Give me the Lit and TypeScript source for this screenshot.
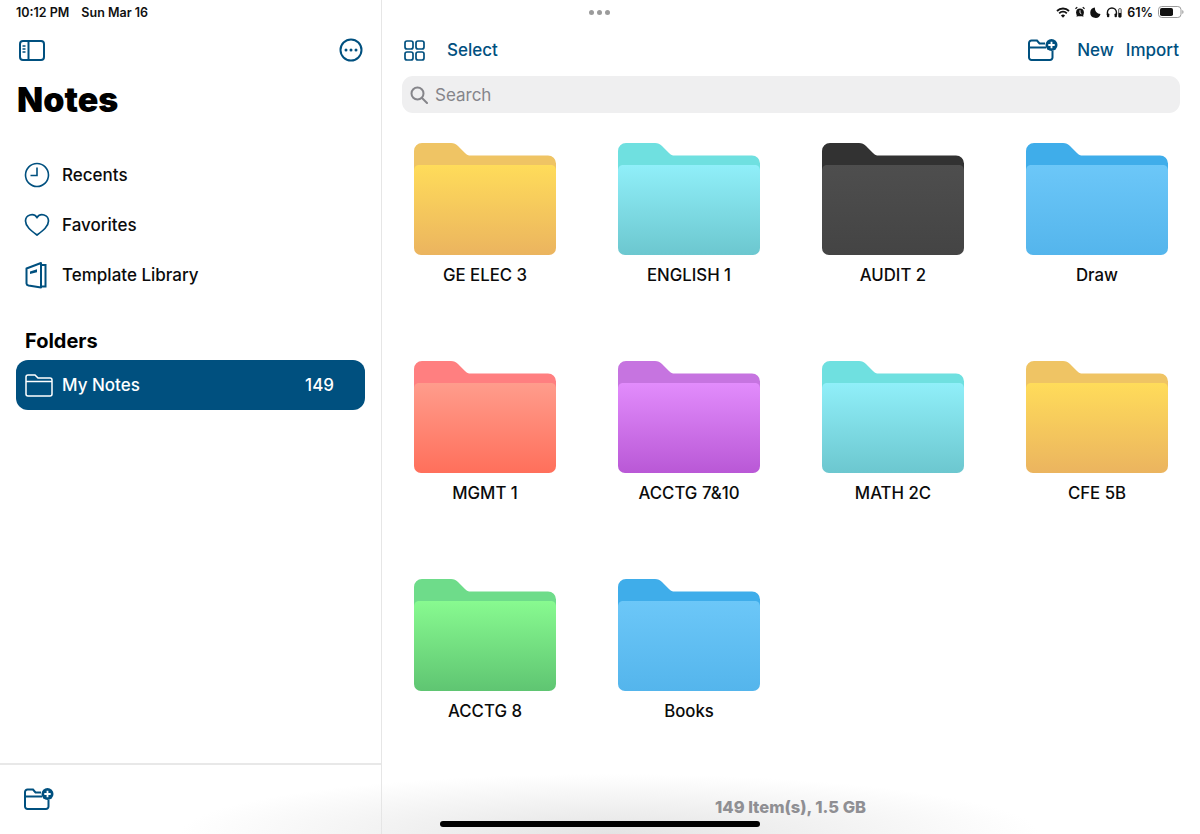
import { LitElement, html, css, svg } from 'lit';
import { customElement } from 'lit/decorators.js';

const INK = '#00507f';

type Tone = { back: string; top: string; bottom: string };

const TONES: Record<string, Tone> = {
  yellow: { back: '#efc464', top: '#ffdc5a', bottom: '#ebb45f' },
  cyan: { back: '#6fe0e0', top: '#90eff9', bottom: '#6cc7cf' },
  dark: { back: '#323232', top: '#4e4e4e', bottom: '#444444' },
  blue: { back: '#3fadea', top: '#6cc7f8', bottom: '#54b5ec' },
  red: { back: '#ff7f80', top: '#ff9c8c', bottom: '#ff6f5b' },
  purple: { back: '#c674e0', top: '#e28cfc', bottom: '#b958d6' },
  green: { back: '#6edc8a', top: '#88fa90', bottom: '#5fc572' },
};

const FOLDERS = [
  { name: 'GE ELEC 3', tone: 'yellow' },
  { name: 'ENGLISH 1', tone: 'cyan' },
  { name: 'AUDIT 2', tone: 'dark' },
  { name: 'Draw', tone: 'blue' },
  { name: 'MGMT 1', tone: 'red' },
  { name: 'ACCTG 7&10', tone: 'purple' },
  { name: 'MATH 2C', tone: 'cyan' },
  { name: 'CFE 5B', tone: 'yellow' },
  { name: 'ACCTG 8', tone: 'green' },
  { name: 'Books', tone: 'blue' },
];

const folderArt = (tone: Tone, id: string) => html`
  <svg class="folder-art" viewBox="0 0 142 112" width="142" height="112">
    <defs>
      <linearGradient id=${id} x1="0" y1="0" x2="0" y2="1">
        <stop offset="0" stop-color=${tone.top}></stop>
        <stop offset="1" stop-color=${tone.bottom}></stop>
      </linearGradient>
    </defs>
    <path
      d="M0 8a8 8 0 0 1 8-8h29c3 0 5 1 7 3l7 7c2 2 3 2.500 6 2.500h77a8 8 0 0 1 8 8V32H0z"
      fill=${tone.back}
    ></path>
    <path
      d="M0 28C0 24 2 22 5 22H137C140 22 142 24 142 28V105a7 7 0 0 1-7 7H7a7 7 0 0 1-7-7z"
      fill="url(#${id})"
    ></path>
  </svg>
`;

const icon = (w: number, h: number, body: unknown, box = `0 0 ${w} ${h}`) => html`
  <svg class="icon" width=${w} height=${h} viewBox=${box} fill="none" stroke=${INK} stroke-width="2">
    ${body}
  </svg>
`;

const ICONS = {
  sidebar: icon(
    26,
    21,
    svg`<rect x="1" y="1" width="24" height="19" rx="3"></rect>
      <path d="M9.500 1v19"></path>
      <path d="M3.500 6h3M3.500 9h3M3.500 12h3" stroke-width="1.500"></path>`,
  ),
  more: icon(
    24,
    24,
    svg`<circle cx="12" cy="12" r="10.500"></circle>
      <g fill=${INK} stroke="none">
        <circle cx="7" cy="12" r="1.500"></circle>
        <circle cx="12" cy="12" r="1.500"></circle>
        <circle cx="17" cy="12" r="1.500"></circle>
      </g>`,
  ),
  clock: icon(
    26,
    26,
    svg`<circle cx="13" cy="13" r="11.500" stroke-width="1.600"></circle>
      <path d="M13 5.500v8H6.500" stroke-width="1.600"></path>`,
  ),
  heart: icon(
    26,
    24,
    svg`<path d="M13 22C7 17.500 1.500 13.500 1.500 8A6.300 6.300 0 0 1 13 4.500 6.300 6.300 0 0 1 24.500 8C24.500 13.500 19 17.500 13 22Z" stroke-width="1.700"></path>`,
  ),
  book: icon(
    24,
    28,
    svg`<path d="M2.500 7.500 17 2v24.500L4.500 24.500Q2.500 24 2.500 22.500Z" stroke-linejoin="round"></path>
      <path d="M17 4h4.500v21.500H17"></path>
      <path d="M6 10.500 13 8.200v3L6 13z" fill=${INK} stroke="none"></path>`,
  ),
  folder: html`<svg class="icon" width="28" height="23" viewBox="0 0 28 23" fill="none" stroke="#fff" stroke-width="1.500">
    <path d="M1 4V3a2 2 0 0 1 2-2h7l3 3h12a2 2 0 0 1 2 2v14a2 2 0 0 1-2 2H3a2 2 0 0 1-2-2z"></path>
    <path d="M1 7.500h26"></path>
  </svg>`,
  grid: icon(
    21,
    21,
    svg`<g stroke-width="1.700">
      <rect x="1" y="1" width="8" height="8" rx="2"></rect>
      <rect x="12" y="1" width="8" height="8" rx="2"></rect>
      <rect x="1" y="12" width="8" height="8" rx="2"></rect>
      <rect x="12" y="12" width="8" height="8" rx="2"></rect>
    </g>`,
  ),
  folderPlus: icon(
    30,
    22,
    svg`<path d="M17 4.500H11.500L9 1.500H3.500A2.500 2.500 0 0 0 1 4V18.500A2.500 2.500 0 0 0 3.500 21H22a2.500 2.500 0 0 0 2.500-2.500V12"></path>
      <path d="M1 8.500H18"></path>
      <circle cx="23.500" cy="6" r="6" fill=${INK} stroke="none"></circle>
      <path d="M23.500 2.800v6.400M20.300 6h6.400" stroke="#fff" stroke-width="1.800"></path>`,
  ),
};

@customElement('status-icons')
class StatusIcons extends LitElement {
  static styles = css`
    :host {
      display: flex;
      align-items: center;
      gap: 5px;
      font: 600 12.5px 'Inter', sans-serif;
      color: #111;
    }

    svg {
      display: block;
    }
  `;

  render() {
    return html`
      <svg width="14" height="11" viewBox="0 0 14 11" fill="none" stroke="#111" stroke-width="1.800">
        <path d="M1 4a8.500 8.500 0 0 1 12 0M3.200 6.300a5.300 5.300 0 0 1 7.600 0"></path>
        <path d="M7 10.800 4.900 8.500a3 3 0 0 1 4.200 0z" fill="#111" stroke="none"></path>
      </svg>
      <svg width="10" height="12" viewBox="0 0 11 12">
        <circle cx="5.500" cy="6.500" r="4.300" fill="#111"></circle>
        <path d="M.5 2.500 2.500.8M10.500 2.500 8.500.8M2 11l1-1.500M9 11 8 9.500" stroke="#111" stroke-width="1.300"></path>
        <path d="M5.500 4v3l1.500 1" stroke="#fff" fill="none"></path>
      </svg>
      <svg width="11" height="11" viewBox="0 0 11 11">
        <path d="M5 .5A5.200 5.200 0 1 0 10.500 7 5.500 5.500 0 0 1 5 .5Z" fill="#111"></path>
      </svg>
      <svg width="16" height="12" viewBox="0 0 17 12" fill="none" stroke="#111" stroke-width="1.500">
        <path d="M1.500 9V6.500a4.800 4.800 0 0 1 9.600 0V9"></path>
        <rect x="1" y="7.500" width="2.500" height="4" rx="1" fill="#111" stroke="none"></rect>
        <rect x="9.100" y="7.500" width="2.500" height="4" rx="1" fill="#111" stroke="none"></rect>
        <rect x="13.500" y="2.500" width="2.600" height="9" rx=".6" stroke-width=".8"></rect>
        <rect x="13.500" y="7" width="2.600" height="4.500" fill="#111" stroke="none"></rect>
      </svg>
      <span>61%</span>
      <svg width="26" height="12" viewBox="0 0 26 12">
        <rect x=".5" y=".5" width="22.500" height="11" rx="3.200" fill="none" stroke="#9a9a9a"></rect>
        <rect x="2" y="2" width="13" height="8" rx="1.800" fill="#111"></rect>
        <path d="M24.300 4v4a2 2 0 0 0 1.200-2 2 2 0 0 0-1.200-2z" fill="#9a9a9a"></path>
      </svg>
    `;
  }
}

@customElement('app-root')
export class AppRoot extends LitElement {
  static styles = css`
    :host {
      display: flex;
      position: relative;
      width: 1200px;
      height: 834px;
      overflow: hidden;
      background: #fff;
      color: #0b0b0b;
      font-family: 'Inter', 'Liberation Sans', sans-serif;
    }

    .icon {
      display: block;
      flex: none;
    }

    .sidebar {
      width: 381px;
      flex: none;
      display: flex;
      flex-direction: column;
      border-right: 1px solid #e6e6e6;
    }

    .clock-row {
      height: 24px;
      padding-left: 16px;
      display: flex;
      align-items: center;
      gap: 12px;
      font-size: 12.500px;
      font-weight: 600;
      color: #111;
    }

    .side-tools {
      display: flex;
      justify-content: space-between;
      align-items: center;
      padding: 14px 18px 0 19px;
      height: 24px;
    }

    h1 {
      margin: 16px 0 0 17px;
      font-size: 34px;
      line-height: 44px;
      font-weight: 900;
      color: #000;
    }

    .nav {
      margin-top: 28px;
      display: flex;
      flex-direction: column;
    }

    .nav-row {
      height: 50px;
      padding-left: 24px;
      display: flex;
      align-items: center;
      font-size: 17px;
      font-weight: 500;
    }

    .nav-icon {
      width: 38px;
      display: flex;
      flex: none;
    }

    h2 {
      margin: 26px 0 0 25px;
      font-size: 20px;
      line-height: 30px;
      font-weight: 700;
      color: #000;
    }

    .current {
      margin: 4px 16px 0;
      height: 50px;
      padding: 0 31px 0 9px;
      border-radius: 12px;
      background: #00507f;
      color: #fff;
      display: flex;
      align-items: center;
      font-size: 17px;
      font-weight: 500;
    }

    .current .count {
      margin-left: auto;
    }

    .current .name {
      margin-left: 9px;
    }

    .side-foot {
      margin-top: auto;
      height: 71px;
      border-top: 2px solid #e8e8e8;
      padding: 23px 0 0 24px;
      box-sizing: border-box;
    }

    .main {
      flex: 1;
      display: flex;
      flex-direction: column;
      min-width: 0;
    }

    .status {
      height: 24px;
      display: flex;
      align-items: center;
      padding: 0 16px 0 207px;
    }

    .grabber {
      display: flex;
      gap: 3px;
    }

    .grabber i {
      width: 5px;
      height: 5px;
      border-radius: 50%;
      background: #9b9b9b;
    }

    status-icons {
      margin-left: auto;
    }

    .toolbar {
      height: 24px;
      margin-top: 14px;
      padding: 0 21px 0 22px;
      display: flex;
      align-items: center;
      color: #00507f;
      font-size: 17px;
      font-weight: 500;
    }

    .toolbar .select {
      margin-left: 22px;
    }

    .toolbar .right {
      margin-left: auto;
      display: flex;
      align-items: center;
      gap: 12px;
    }

    .toolbar .new {
      margin-left: 7px;
    }

    .search {
      margin: 14px 20px 0;
      height: 37px;
      border-radius: 11px;
      background: #efeff0;
      display: flex;
      align-items: center;
      gap: 7px;
      padding-left: 8px;
      color: #85858a;
      font-size: 17px;
    }

    .grid {
      margin: 30px 0 0;
      padding: 0 1px;
      display: grid;
      grid-template-columns: repeat(4, 1fr);
      grid-auto-rows: 218px;
    }

    .folder {
      display: flex;
      flex-direction: column;
      align-items: center;
      font-size: 16.800px;
      font-weight: 500;
      color: #0b0b0b;
    }

    .folder span {
      margin-top: 10px;
      line-height: 21px;
    }

    .fade {
      position: absolute;
      left: 180px;
      right: 160px;
      bottom: 0;
      height: 60px;
      background: radial-gradient(50% 100% at 50% 100%, #e4e4e4, #fff0);
      pointer-events: none;
    }

    .summary {
      position: absolute;
      left: 715px;
      top: 798px;
      font-size: 16.500px;
      line-height: 18px;
      font-weight: 800;
      color: #8f8f93;
      white-space: nowrap;
    }

    .home {
      position: absolute;
      left: 440px;
      bottom: 7px;
      width: 320px;
      height: 6px;
      border-radius: 3px;
      background: #000;
    }
  `;

  render() {
    return html`
      <aside class="sidebar">
        <div class="clock-row"><span>10:12 PM</span><span>Sun Mar 16</span></div>
        <div class="side-tools">${ICONS.sidebar}${ICONS.more}</div>
        <h1>Notes</h1>
        <div class="nav">
          <div class="nav-row"><span class="nav-icon">${ICONS.clock}</span>Recents</div>
          <div class="nav-row"><span class="nav-icon">${ICONS.heart}</span>Favorites</div>
          <div class="nav-row"><span class="nav-icon">${ICONS.book}</span>Template Library</div>
        </div>
        <h2>Folders</h2>
        <div class="current">
          ${ICONS.folder}
          <span class="name">My Notes</span>
          <span class="count">149</span>
        </div>
        <div class="side-foot">${ICONS.folderPlus}</div>
      </aside>

      <main class="main">
        <div class="status">
          <div class="grabber"><i></i><i></i><i></i></div>
          <status-icons></status-icons>
        </div>
        <div class="toolbar">
          ${ICONS.grid}
          <span class="select">Select</span>
          <div class="right">
            ${ICONS.folderPlus}
            <span class="new">New</span>
            <span>Import</span>
          </div>
        </div>
        <div class="search">
          <svg class="icon" width="18" height="18" viewBox="0 0 18 18" fill="none" stroke="#85858a" stroke-width="2">
            <circle cx="7.500" cy="7.500" r="6"></circle>
            <path d="M12 12l5 5" stroke-linecap="round"></path>
          </svg>
          Search
        </div>
        <div class="grid">
          ${FOLDERS.map(
            (f, i) => html`<div class="folder">
              ${folderArt(TONES[f.tone], `folder-fill-${i}`)}
              <span>${f.name}</span>
            </div>`,
          )}
        </div>
      </main>

      <div class="fade"></div>
      <div class="summary">149 Item(s), 1.5 GB</div>
      <div class="home"></div>
    `;
  }
}

export { StatusIcons };
